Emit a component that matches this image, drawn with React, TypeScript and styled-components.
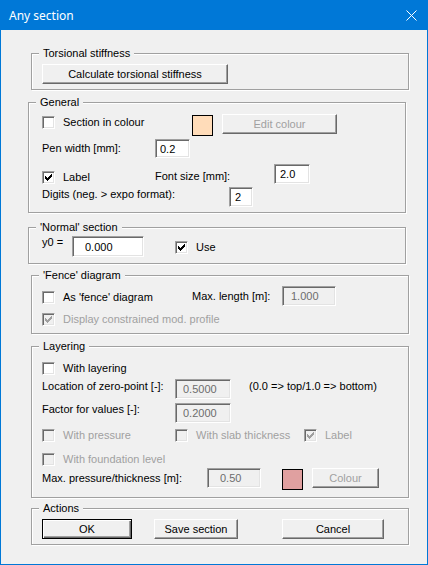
import React from "react";
import styled, { createGlobalStyle, css } from "styled-components";

interface PlaceProps {
  $w?: number;
  $ml?: number;
  $top?: number;
}

const GlobalStyle = createGlobalStyle`
  html, body {
    margin: 0;
    padding: 0;
    background: #f0f0f0;
  }
`;

const place = css<PlaceProps>`
  flex: none;
  ${(p) => (p.$w !== undefined ? `width: ${p.$w}px;` : "")}
  ${(p) => (p.$ml !== undefined ? `margin-left: ${p.$ml}px;` : "")}
  ${(p) =>
    p.$top !== undefined
      ? `align-self: flex-start; margin-top: ${p.$top}px;`
      : ""}
`;

const Window = styled.div`
  width: 428px;
  height: 565px;
  display: flex;
  flex-direction: column;
  background: #f0f0f0;
  font-family: "Liberation Sans", Arial, sans-serif;
  font-size: 11px;
  color: #000;
  overflow: hidden;
`;

const TitleBar = styled.div`
  height: 30px;
  flex: none;
  display: flex;
  align-items: center;
  justify-content: space-between;
  padding: 0 11px 0 9px;
  background: #0078d7;
  color: #fff;
  font-family: "Noto Sans", "Open Sans", sans-serif;
  font-size: 12px;
`;

const Body = styled.div`
  flex: 1;
  display: flex;
  flex-direction: column;
  border: 1px solid #0078d7;
  border-top: none;
`;

const Group = styled.div<{ $left: number; $mt: number; $h: number; $pt: number }>`
  position: relative;
  box-sizing: border-box;
  flex: none;
  width: 378px;
  height: ${(p) => p.$h}px;
  margin: ${(p) => p.$mt}px 0 0 ${(p) => p.$left - 1}px;
  padding: ${(p) => p.$pt}px 0 0 ${(p) => 41 - p.$left}px;
  border: 1px solid #a0a0a0;
  box-shadow: 1px 1px 0 #fff, inset 1px 1px 0 #fff;
  display: flex;
  flex-direction: column;
`;

const Legend = styled.span`
  position: absolute;
  top: -7px;
  left: 7px;
  padding: 0 4px;
  line-height: 13px;
  background: #f0f0f0;
  white-space: nowrap;
`;

const Row = styled.div<{ $h: number; $mt?: number }>`
  flex: none;
  display: flex;
  align-items: center;
  height: ${(p) => p.$h}px;
  margin-top: ${(p) => p.$mt ?? 0}px;
`;

const Text = styled.div<PlaceProps & { $muted?: boolean }>`
  ${place}
  line-height: 13px;
  white-space: nowrap;
  color: ${(p) => (p.$muted ? "#a0a0a0" : "#000")};
`;

const Button = styled.button<PlaceProps & { $default?: boolean }>`
  ${place}
  box-sizing: border-box;
  height: 20px;
  padding: 0;
  font: inherit;
  color: ${(p) => (p.disabled ? "#a0a0a0" : "#000")};
  background: #f0f0f0;
  border: 1px solid;
  border-color: ${(p) =>
    p.$default ? "#000" : "#fff #696969 #696969 #fff"};
  box-shadow: ${(p) =>
    p.$default
      ? "inset 1px 1px 0 #fff, inset -1px -1px 0 #696969, inset -2px -2px 0 #a0a0a0"
      : "inset -1px -1px 0 #a0a0a0"};
`;

const Field = styled.input<PlaceProps & { $h?: number; $pad: number }>`
  ${place}
  box-sizing: border-box;
  height: ${(p) => p.$h ?? 20}px;
  margin: 0;
  padding: 0 0 0 ${(p) => p.$pad}px;
  font: inherit;
  color: ${(p) => (p.disabled ? "#6d6d6d" : "#000")};
  background: ${(p) => (p.disabled ? "#f0f0f0" : "#fff")};
  border: 1px solid;
  border-color: #a0a0a0 #fff #fff #a0a0a0;
  box-shadow: inset 1px 1px 0 #696969, inset -1px -1px 0 #e3e3e3;
  outline: none;
`;

const Swatch = styled.div<PlaceProps & { $color: string }>`
  ${place}
  box-sizing: border-box;
  width: 21px;
  height: 21px;
  border: 1px solid #000;
  background: ${(p) => p.$color};
`;

const CheckLabel = styled.label<PlaceProps & { $disabled?: boolean }>`
  ${place}
  display: flex;
  align-items: center;
  gap: 8px;
  line-height: 13px;
  white-space: nowrap;
  color: ${(p) => (p.$disabled ? "#a0a0a0" : "#000")};
`;

const Box = styled.span<{ $disabled?: boolean }>`
  box-sizing: border-box;
  flex: none;
  width: 13px;
  height: 13px;
  display: block;
  background: ${(p) => (p.$disabled ? "#f0f0f0" : "#fff")};
  border: 1px solid;
  border-color: #a0a0a0 #fff #fff #a0a0a0;
  box-shadow: inset 1px 1px 0 #696969, inset -1px -1px 0 #e3e3e3;
  position: relative;

  svg {
    position: absolute;
    left: 0;
    top: 0;
  }
`;

const checkTops = [2, 3, 4, 3, 2, 1, 0];
const checkPath = checkTops
  .map((t, i) => `M${2 + i} ${2 + t}h1v3h-1z`)
  .join("");

interface CheckProps extends PlaceProps {
  label: string;
  checked?: boolean;
  disabled?: boolean;
}

const Check = ({ label, checked, disabled, ...rest }: CheckProps) => (
  <CheckLabel $disabled={disabled} {...rest}>
    <Box $disabled={disabled}>
      {checked && (
        <svg width="11" height="11" viewBox="0 0 11 11" shapeRendering="crispEdges">
          <path d={checkPath} fill={disabled ? "#a0a0a0" : "#000"} />
        </svg>
      )}
    </Box>
    {label}
  </CheckLabel>
);

const CloseIcon = () => (
  <svg width="11" height="11" viewBox="0 0 11 11">
    <path d="M0.5 0.5L10.5 10.5M10.5 0.5L0.5 10.5" stroke="#fff" strokeWidth="1" />
  </svg>
);

const App = () => {
  return (
    <Window>
      <GlobalStyle />
      <TitleBar>
        <span>Any section</span>
        <CloseIcon />
      </TitleBar>
      <Body>
        <Group $left={31} $mt={23} $h={37} $pt={10}>
          <Legend>Torsional stiffness</Legend>
          <Row $h={20}>
            <Button $w={186}>Calculate torsional stiffness</Button>
          </Row>
        </Group>

        <Group $left={28} $mt={12} $h={111} $pt={11}>
          <Legend>General</Legend>
          <Row $h={22}>
            <Check $w={150} $top={2} label="Section in colour" />
            <Swatch $top={1} $color="#ffdcb9" />
            <Button $ml={9} $w={115} $top={0} disabled>
              Edit colour
            </Button>
          </Row>
          <Row $h={19} $mt={3}>
            <Text $w={113}>Pen width [mm]:</Text>
            <Field $w={35} $h={19} $pad={4} readOnly value="0.2" />
          </Row>
          <Row $h={20} $mt={6}>
            <Check $w={113} $top={7} checked label="Label" />
            <Text $w={119} $top={6}>Font size [mm]:</Text>
            <Field $w={36} $pad={5} readOnly value="2.0" />
          </Row>
          <Row $h={20} $mt={3}>
            <Text $w={187} $top={1}>Digits (neg. &gt; expo format):</Text>
            <Field $w={24} $pad={5} readOnly value="2" />
          </Row>
        </Group>

        <Group $left={28} $mt={14} $h={37} $pt={8}>
          <Legend>'Normal' section</Legend>
          <Row $h={21}>
            <Text $w={30} $top={0}>y0 =</Text>
            <Field $w={72} $h={21} $pad={12} readOnly value="0.000" />
            <Check $ml={31} $top={5} checked label="Use" />
          </Row>
        </Group>

        <Group $left={31} $mt={11} $h={59} $pt={10}>
          <Legend>'Fence' diagram</Legend>
          <Row $h={20}>
            <Check $w={150} $top={5} label="As 'fence' diagram" />
            <Text $w={90}>Max. length [m]:</Text>
            <Field $w={54} $pad={8} disabled readOnly value="1.000" />
          </Row>
          <Row $h={13} $mt={7}>
            <Check disabled checked label="Display constrained mod. profile" />
          </Row>
        </Group>

        <Group $left={31} $mt={12} $h={152} $pt={15}>
          <Legend>Layering</Legend>
          <Row $h={13}>
            <Check label="With layering" />
          </Row>
          <Row $h={20} $mt={4}>
            <Text $w={133} $top={1}>Location of zero-point [-]:</Text>
            <Field $w={56} $pad={7} disabled readOnly value="0.5000" />
            <Text $ml={18} $top={1}>(0.0 =&gt; top/1.0 =&gt; bottom)</Text>
          </Row>
          <Row $h={20} $mt={4}>
            <Text $w={133} $top={0}>Factor for values [-]:</Text>
            <Field $w={56} $pad={7} disabled readOnly value="0.2000" />
          </Row>
          <Row $h={13} $mt={6}>
            <Check $w={133} disabled label="With pressure" />
            <Check $w={129} disabled label="With slab thickness" />
            <Check disabled checked label="Label" />
          </Row>
          <Row $h={13} $mt={11}>
            <Check disabled label="With foundation level" />
          </Row>
          <Row $h={22} $mt={2}>
            <Text $w={165} $top={4}>Max. pressure/thickness [m]:</Text>
            <Field $w={54} $top={2} $pad={12} disabled readOnly value="0.50" />
            <Swatch $ml={21} $top={1} $color="#e0a0a0" />
            <Button $ml={9} $w={67} $top={0} disabled>
              Colour
            </Button>
          </Row>
        </Group>

        <Group $left={31} $mt={10} $h={37} $pt={10}>
          <Legend>Actions</Legend>
          <Row $h={20}>
            <Button $w={90} $default>
              OK
            </Button>
            <Button $ml={22} $w={84}>
              Save section
            </Button>
            <Button $ml={44} $w={102}>
              Cancel
            </Button>
          </Row>
        </Group>
      </Body>
    </Window>
  );
};

export default App;
